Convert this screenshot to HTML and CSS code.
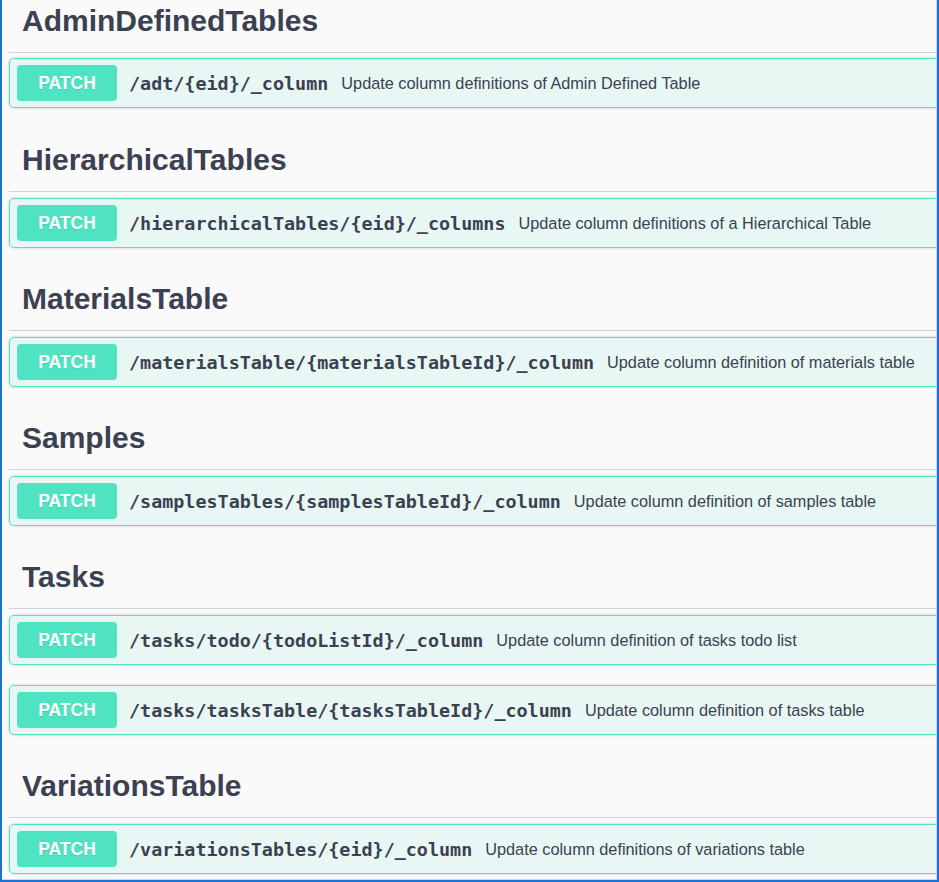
FILE: index.html
```html
<!DOCTYPE html>
<html lang="en">
<head>
  <meta charset="UTF-8" />
  <meta name="viewport" content="width=device-width, initial-scale=1.0"/>
  <title>API operations</title>
  <link rel="stylesheet" href="styles.css">
</head>
<body>
  <div class="frame">
    <div class="viewport">
      <div class="content">

        <section class="tag-section">
          <h3 class="tag">AdminDefinedTables</h3>
          <div class="opblock">
            <span class="method">PATCH</span>
            <span class="path">/adt/{eid}/_column</span>
            <span class="summary">Update column definitions of Admin Defined Table</span>
          </div>
        </section>

        <section class="tag-section">
          <h3 class="tag">HierarchicalTables</h3>
          <div class="opblock">
            <span class="method">PATCH</span>
            <span class="path">/hierarchicalTables/{eid}/_columns</span>
            <span class="summary">Update column definitions of a Hierarchical Table</span>
          </div>
        </section>

        <section class="tag-section">
          <h3 class="tag">MaterialsTable</h3>
          <div class="opblock">
            <span class="method">PATCH</span>
            <span class="path">/materialsTable/{materialsTableId}/_column</span>
            <span class="summary">Update column definition of materials table</span>
          </div>
        </section>

        <section class="tag-section">
          <h3 class="tag">Samples</h3>
          <div class="opblock">
            <span class="method">PATCH</span>
            <span class="path">/samplesTables/{samplesTableId}/_column</span>
            <span class="summary">Update column definition of samples table</span>
          </div>
        </section>

        <section class="tag-section">
          <h3 class="tag">Tasks</h3>
          <div class="opblock">
            <span class="method">PATCH</span>
            <span class="path">/tasks/todo/{todoListId}/_column</span>
            <span class="summary">Update column definition of tasks todo list</span>
          </div>
          <div class="opblock">
            <span class="method">PATCH</span>
            <span class="path">/tasks/tasksTable/{tasksTableId}/_column</span>
            <span class="summary">Update column definition of tasks table</span>
          </div>
        </section>

        <section class="tag-section">
          <h3 class="tag">VariationsTable</h3>
          <div class="opblock">
            <span class="method">PATCH</span>
            <span class="path">/variationsTables/{eid}/_column</span>
            <span class="summary">Update column definitions of variations table</span>
          </div>
        </section>

      </div>
    </div>
  </div>
</body>
</html>
```

FILE: styles.css
```css
html, body {
  margin: 0;
  padding: 0;
  background: #ffffff;
}

body {
  font-family: "Liberation Sans", Arial, sans-serif;
  color: #3b4151;
}

.frame {
  width: 939px;
  height: 882px;
  box-sizing: border-box;
  border: 2px solid #1a73d4;
  border-top: none;
  background: #fafafa;
}

.viewport {
  height: 100%;
  box-sizing: border-box;
  border-right: 1px solid #d4d4d4;
  border-bottom: 1px solid #d4d4d4;
  overflow: hidden;
}

.content {
  margin-top: -10px;
  margin-right: -40px;
  padding-left: 7px;
}

.tag {
  margin: 0 0 6px 0;
  height: 62px;
  padding: 0 0 0 13px;
  display: flex;
  align-items: center;
  font-size: 30px;
  font-weight: bold;
  color: #3b4151;
  border-bottom: 1px solid #d2d3d6;
}

/* the crop cuts the first heading, so it sits 1px higher */
.tag-section:first-child .tag {
  margin-bottom: 5px;
}

.tag-section:first-child .opblock {
  margin-bottom: 21px;
}

.opblock {
  display: flex;
  align-items: center;
  height: 50px;
  box-sizing: border-box;
  padding: 6px 7px;
  margin-bottom: 20px;
  border: 1px solid #50e3c2;
  border-radius: 5px;
  background: rgba(80, 227, 194, 0.1);
  box-shadow: 0 0 3px rgba(0, 0, 0, 0.19);
}

.method {
  width: 100px;
  height: 36px;
  flex-shrink: 0;
  display: flex;
  align-items: center;
  justify-content: center;
  border-radius: 4px;
  background: #50e3c2;
  color: #ffffff;
  font-size: 17.5px;
  font-weight: bold;
  text-shadow: 0 1px 0 rgba(0, 0, 0, 0.1);
}

.path {
  padding: 0 13px 0 12px;
  font-family: "DejaVu Sans Mono", "Liberation Mono", monospace;
  font-size: 18.4px;
  font-weight: bold;
  color: #3b4151;
  white-space: nowrap;
}

.summary {
  font-size: 16.3px;
  color: #3b4151;
  white-space: nowrap;
}
```
